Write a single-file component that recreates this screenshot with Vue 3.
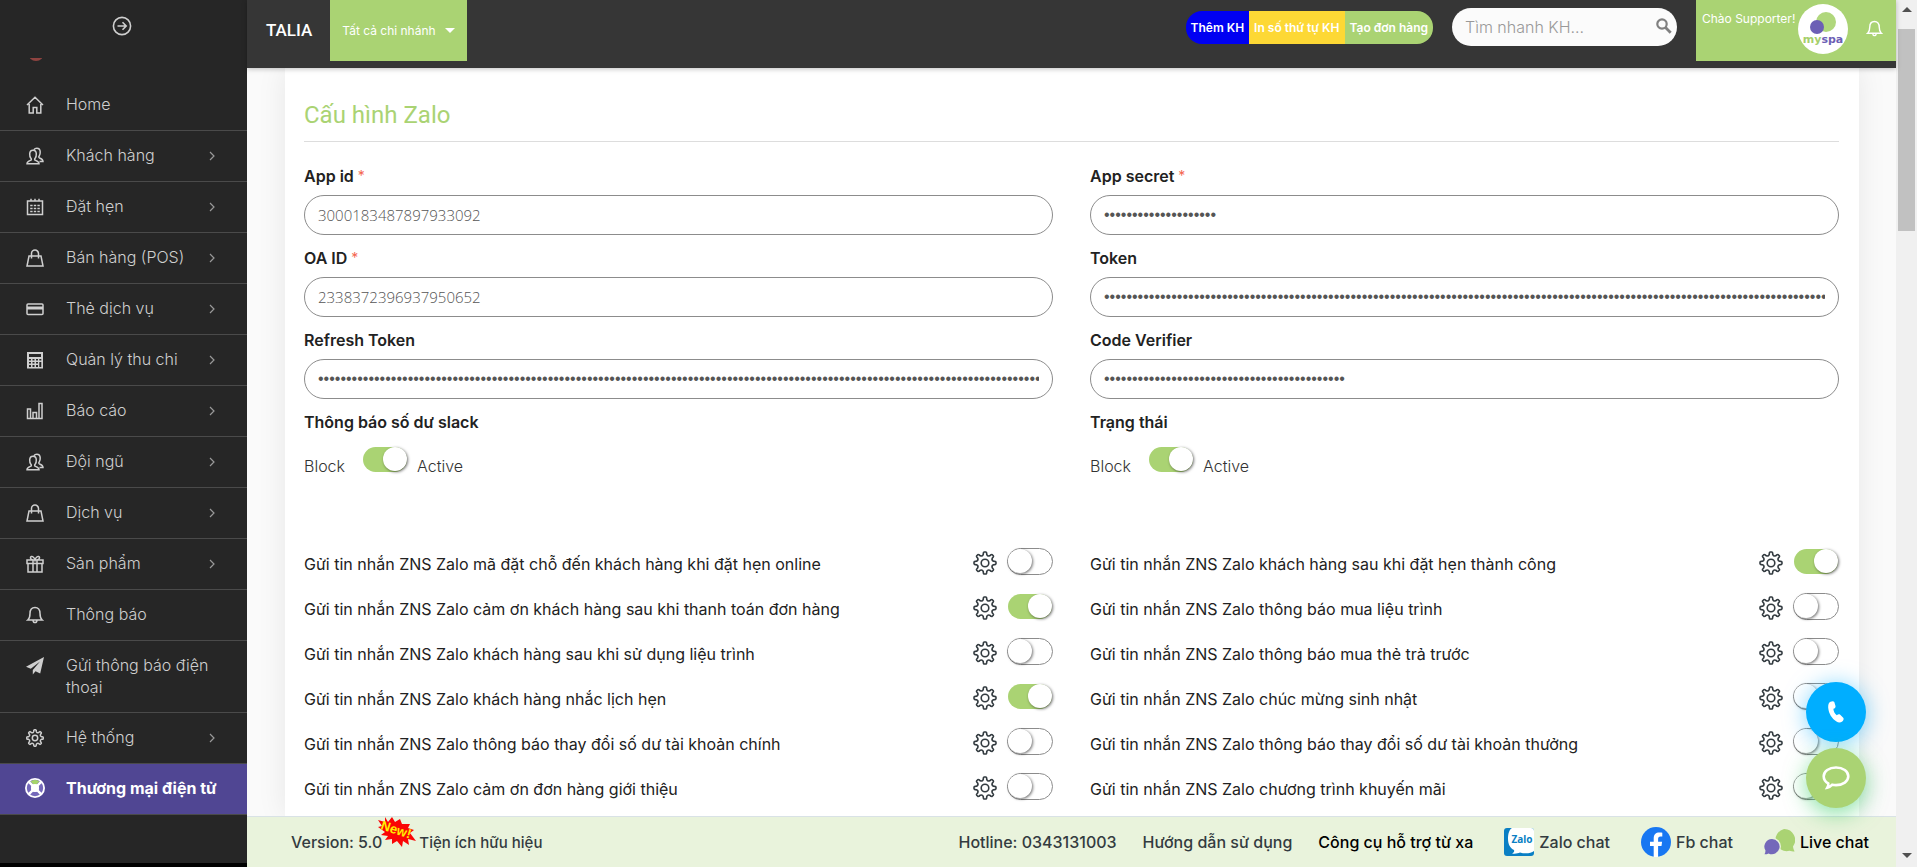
<script setup>
import { ref, reactive } from 'vue'

const menu = [
  { label: 'Home', icon: 'home' },
  { label: 'Khách hàng', icon: 'users', sub: true },
  { label: 'Đặt hẹn', icon: 'calendar', sub: true },
  { label: 'Bán hàng (POS)', icon: 'bag', sub: true },
  { label: 'Thẻ dịch vụ', icon: 'card', sub: true },
  { label: 'Quản lý thu chi', icon: 'calculator', sub: true },
  { label: 'Báo cáo', icon: 'chart', sub: true },
  { label: 'Đội ngũ', icon: 'users', sub: true },
  { label: 'Dịch vụ', icon: 'bag', sub: true },
  { label: 'Sản phẩm', icon: 'gift', sub: true },
  { label: 'Thông báo', icon: 'bell' },
  { label: 'Gửi thông báo điện thoại', icon: 'plane' },
  { label: 'Hệ thống', icon: 'gear', sub: true },
  { label: 'Thương mại điện tử', icon: 'ring', active: true },
]

const fields = reactive([
  { id: 'app-id', label: 'App id', required: true, type: 'text', value: '3000183487897933092' },
  { id: 'app-secret', label: 'App secret', required: true, type: 'password', value: 'x'.repeat(20) },
  { id: 'oa-id', label: 'OA ID', required: true, type: 'text', value: '2338372396937950652' },
  { id: 'token', label: 'Token', type: 'password', value: 'x'.repeat(180) },
  { id: 'refresh-token', label: 'Refresh Token', type: 'password', value: 'x'.repeat(180) },
  { id: 'code-verifier', label: 'Code Verifier', type: 'password', value: 'x'.repeat(43) },
])

const states = reactive([
  { id: 'slack', label: 'Thông báo số dư slack', on: true },
  { id: 'status', label: 'Trạng thái', on: true },
])

const messages = reactive([
  { label: 'Gửi tin nhắn ZNS Zalo mã đặt chỗ đến khách hàng khi đặt hẹn online', on: false },
  { label: 'Gửi tin nhắn ZNS Zalo khách hàng sau khi đặt hẹn thành công', on: true },
  { label: 'Gửi tin nhắn ZNS Zalo cảm ơn khách hàng sau khi thanh toán đơn hàng', on: true },
  { label: 'Gửi tin nhắn ZNS Zalo thông báo mua liệu trình', on: false },
  { label: 'Gửi tin nhắn ZNS Zalo khách hàng sau khi sử dụng liệu trình', on: false },
  { label: 'Gửi tin nhắn ZNS Zalo thông báo mua thẻ trả trước', on: false },
  { label: 'Gửi tin nhắn ZNS Zalo khách hàng nhắc lịch hẹn', on: true },
  { label: 'Gửi tin nhắn ZNS Zalo chúc mừng sinh nhật', on: false },
  { label: 'Gửi tin nhắn ZNS Zalo thông báo thay đổi số dư tài khoản chính', on: false },
  { label: 'Gửi tin nhắn ZNS Zalo thông báo thay đổi số dư tài khoản thưởng', on: false },
  { label: 'Gửi tin nhắn ZNS Zalo cảm ơn đơn hàng giới thiệu', on: false },
  { label: 'Gửi tin nhắn ZNS Zalo chương trình khuyến mãi', on: false },
])

const search = ref('')

// Eight-toothed cog outline centred on a 24x24 box
function gearOutline() {
  const at = (r, deg) => {
    const a = (deg * Math.PI) / 180
    return `${(12 + r * Math.sin(a)).toFixed(2)} ${(12 - r * Math.cos(a)).toFixed(2)}`
  }
  let d = `M${at(8.6, -12)}`
  for (let i = 0; i < 8; i++) {
    const a = i * 45
    d += `L${at(10.2, a - 9)}Q${at(11, a - 8)} ${at(11, a - 4)}L${at(11, a + 4)}Q${at(11, a + 8)} ${at(10.2, a + 9)}`
    d += `L${at(8.6, a + 12)}Q${at(7, a + 22.5)} ${at(8.6, a + 33)}`
  }
  return d + 'Z'
}
const gearPath = gearOutline()

const strokes = {
  home: 'M1 9 9 1.2 17 9M3.2 8v9h4v-5.500h3.600V17h4V8',
  calendar: 'M1.500 3h15v13.500h-15zM5 .8v3M9 .8v3M13 .8v3M4.200 7.500h2.400M7.800 7.500h2.400M11.400 7.500h2.400M4.200 10.500h2.400M7.800 10.500h2.400M11.400 10.500h2.400M4.200 13.500h2.400M7.800 13.500h2.400M11.400 13.500h2.400',
  bag: 'M3 7h12l2 10H1zM5.500 9.500V4.600a3.500 3.500 0 0 1 7 0v4.900',
  chart: 'M1.500 7h3v9.500h-3zM7 10.500h3.500v6H7zM13 1.500h3v15h-3zM4.500 16.500H7M10.500 16.500H13',
  users: 'M1 16.800c0-2.300 1.300-2.700 3.600-3.500 1-.4.9-1.300.3-2C4 10.200 3.600 8.500 3.700 6.800 3.800 4.500 5 3.200 7 3.200s3.200 1.300 3.300 3.600c.1 1.700-.3 3.400-1.200 4.500-.6.700-.7 1.600.3 2 2.300.8 3.600 1.200 3.600 3.500zM8 2.600C8.600 1.700 9.600 1.200 10.800 1.200c2.200 0 3.300 1.400 3.400 3.600.1 1.700-.3 3.200-1 4.200-.6.800-.5 1.600.4 2 2 .7 3.400 1.200 3.400 3.600h-3.500',
  gift: 'M1 5h16v3.500H1zM2 8.500h14V17H2zM7 5v12M11 5v12M9 5C6 5 4 4 4.500 2.300 5.200.5 8 1.500 9 5c1-3.500 3.800-4.500 4.500-2.700C14 4 12 5 9 5',
  bell: 'M1.800 14h14.400c-1.700-1.500-2.200-2.700-2.200-6.500 0-3.800-1.900-6-5-6s-5 2.200-5 6c0 3.800-.5 5-2.200 6.500zM7 14.300c.2 1.500.9 2.200 2 2.200s1.800-.7 2-2.200',
}
</script>

<template>
  <div class="shell">
    <aside class="sidebar">
      <div class="sidebar-top">
        <button class="collapse" type="button" aria-label="Menu">
          <svg viewBox="0 0 20 20" width="20" height="20" fill="none" stroke="currentColor" stroke-width="1.6">
            <circle cx="10" cy="10" r="8.600" />
            <path d="M5.500 10h8.500M10.500 6.300 14.200 10l-3.700 3.700" />
          </svg>
        </button>
        <div class="peek"><span></span></div>
      </div>
      <nav>
        <a v-for="(m, i) in menu" :key="i" href="#" class="item" :class="{ active: m.active }">
          <svg v-if="m.icon === 'gear'" class="ico" viewBox="0 0 24 24" fill="none" stroke="currentColor" stroke-width="2">
            <path :d="gearPath" /><circle cx="12" cy="12" r="3.600" />
          </svg>
          <svg v-else-if="m.icon === 'card'" class="ico" viewBox="0 0 18 18">
            <rect x="1" y="4" width="16" height="10.500" rx="1" fill="none" stroke="currentColor" stroke-width="1.500" />
            <path d="M1 6.500h16v3H1z" fill="currentColor" />
          </svg>
          <svg v-else-if="m.icon === 'calculator'" class="ico" viewBox="0 0 18 18">
            <path d="M1 1h16v16.500H1zM3 3v3h12V3zM3 8v1.500h2V8zM6.500 8v1.500h2V8zM10 8v1.500h2V8zM13.300 8v1.500h2V8zM3 11v1.500h2V11zM6.500 11v1.500h2V11zM10 11v1.500h2V11zM13.300 11v5h2v-5zM3 14v2h2v-2zM6.500 14v2h2v-2zM10 14v2h2v-2z" fill="currentColor" fill-rule="evenodd" />
          </svg>
          <svg v-else-if="m.icon === 'plane'" class="ico" viewBox="0 0 18 18">
            <path d="M18 0 0 9.800l4.800 2L14 4.500 6.800 13v4.500l2.700-3.300 4.700 2.200z" fill="currentColor" />
          </svg>
          <svg v-else-if="m.icon === 'ring'" class="ico ring" viewBox="0 0 20 20">
            <circle cx="10" cy="10" r="10" fill="#fff" />
            <circle cx="10" cy="10" r="6" fill="none" stroke="#7468ba" stroke-width="4.400" />
            <path d="M5.600 3.400a8 8 0 0 1 8.800 0L10 8z" fill="#a5d46a" />
            <path d="M3.600 3.600 16.400 16.400M16.400 3.600 3.600 16.400" stroke="#fff" stroke-width="2.400" />
            <circle cx="10" cy="10" r="4" fill="#fff" />
          </svg>
          <svg v-else class="ico" viewBox="0 0 18 18" fill="none" stroke="currentColor" stroke-width="1.500">
            <path :d="strokes[m.icon]" />
          </svg>
          <span class="item-label">{{ m.label }}</span>
          <svg v-if="m.sub" class="chev" viewBox="0 0 6 10" width="6" height="10" fill="none" stroke="currentColor" stroke-width="1.200">
            <path d="m1 1 4 4-4 4" />
          </svg>
        </a>
      </nav>
    </aside>

    <div class="page">
      <header class="topbar">
        <a href="#" class="brand">TALIA</a>
        <button type="button" class="branch" aria-haspopup="listbox">Tất cả chi nhánh <i class="caret"></i></button>
        <div class="quick">
          <button type="button" class="blue">Thêm KH</button>
          <button type="button" class="yellow">In số thứ tự KH</button>
          <button type="button" class="green">Tạo đơn hàng</button>
        </div>
        <form class="search" @submit.prevent>
          <input v-model="search" type="text" placeholder="Tìm nhanh KH..." aria-label="Tìm nhanh KH" />
          <button type="submit" aria-label="Tìm">
            <svg viewBox="0 0 16 16" width="16" height="16" fill="none" stroke="#808080">
              <circle cx="6" cy="6" r="4.700" stroke-width="2.200" /><path d="m9.500 9.500 5.200 5.200" stroke-width="2.800" />
            </svg>
          </button>
        </form>
        <div class="account">
          <span class="hello">Chào Supporter!</span>
          <a href="#" aria-label="myspa">
            <svg class="avatar" viewBox="0 0 50 50" width="50" height="50">
              <circle cx="25" cy="25" r="25" fill="#fff" />
              <circle cx="28" cy="18" r="10" fill="#b0d77c" />
              <circle cx="19" cy="23" r="7" fill="#6c5fb5" />
              <text x="25" y="39" text-anchor="middle"><tspan fill="#a5cf6b">my</tspan><tspan fill="#6c5fb5">spa</tspan></text>
            </svg>
          </a>
          <button type="button" class="alerts" aria-label="Thông báo">
            <svg viewBox="0 0 18 18" width="17" height="17" fill="none" stroke="currentColor" stroke-width="1.500"><path :d="strokes.bell" /></svg>
          </button>
        </div>
      </header>

      <main class="content">
        <section class="card">
          <h1>Cấu hình Zalo</h1>
          <form @submit.prevent>
            <div class="cols">
              <div v-for="f in fields" :key="f.id" class="field">
                <label :for="f.id">{{ f.label }} <sup v-if="f.required">*</sup></label>
                <input :id="f.id" v-model="f.value" :type="f.type" autocomplete="off" />
              </div>
              <div v-for="s in states" :key="s.id" class="field">
                <label :for="s.id">{{ s.label }}</label>
                <div class="state">
                  <span>Block</span>
                  <input :id="s.id" v-model="s.on" class="switch" type="checkbox" />
                  <span>Active</span>
                </div>
              </div>
            </div>
            <div class="cols messages">
              <div v-for="(m, i) in messages" :key="i" class="message">
                <label :for="'message-' + i">{{ m.label }}</label>
                <button type="button" class="cog" :aria-label="'Cài đặt: ' + m.label">
                  <svg viewBox="0 0 24 24" width="24" height="24" fill="none" stroke="currentColor" stroke-width="1.600" stroke-linejoin="round">
                    <path :d="gearPath" /><circle cx="12" cy="12" r="3.800" />
                  </svg>
                </button>
                <input :id="'message-' + i" v-model="m.on" class="switch" type="checkbox" />
              </div>
            </div>
          </form>
        </section>
      </main>

      <footer class="footer">
        <span class="version">Version: 5.0</span>
        <svg class="new" viewBox="0 0 38 30" width="38" height="30">
          <path d="m7 0 3 5 4-5 3 5 5-3 2 5 8 0-2 4 6 2-4 3 6 8-8-2 1 6-6-4-1 6-5-6-5 3 0-5-7 1 3-4-7-1 4-3L0 10l4-1L0 3l7 2z" fill="#fa0505" />
          <text x="18" y="17" text-anchor="middle" transform="rotate(18 18 13)">New!</text>
        </svg>
        <a href="#" class="tips">Tiện ích hữu hiệu</a>
        <div class="links">
          <a href="#">Hotline: 0343131003</a>
          <a href="#">Hướng dẫn sử dụng</a>
          <a href="#" class="strong">Công cụ hỗ trợ từ xa</a>
          <a href="#" class="chat">
            <svg viewBox="0 0 30 30" width="30" height="30">
              <rect y="1" width="30" height="28" rx="3" fill="#0a7fc4" />
              <path d="M8 1h19a3 3 0 0 1 3 3v20c-3 2.500-9 3-14 1.500-2 1-5 1.500-8 1 2-1 2.500-2 2-3.500C6 21 4 17 4 12c0-5 1-9 4-11z" fill="#fff" />
              <text class="zalo" x="18" y="16" text-anchor="middle">Zalo</text>
            </svg>Zalo chat</a>
          <a href="#" class="chat">
            <svg viewBox="0 0 30 30" width="30" height="30">
              <circle cx="15" cy="15" r="15" fill="#1877f2" />
              <path d="M12.700 30V19H9v-4.300h3.700v-3.300c0-3.800 2.200-5.800 5.600-5.800 1.600 0 3 .2 3 .2v3.800h-1.800c-1.800 0-2.400 1.100-2.400 2.300v2.800h4l-.6 4.300h-3.400v11z" fill="#fff" />
            </svg>Fb chat</a>
          <a href="#" class="chat live">
            <svg viewBox="0 0 31 26" width="31" height="26">
              <path d="M20 0a11 11 0 0 1 9 17.500c.3 2 .8 3.500 1.600 5-2 0-3.600-.1-5.200-.7A11.200 11.200 0 1 1 20 0z" fill="#aad373" />
              <circle cx="8" cy="17.500" r="9" fill="#e9f3dc" />
              <path d="M8 10a7.600 7.600 0 1 1-3.400 14.400c-1.200.6-2.600.8-4.100.8.700-1.100 1-2.200 1-3.600A7.600 7.600 0 0 1 8 10z" fill="#7468ba" />
            </svg>Live chat</a>
        </div>
      </footer>

      <div class="floats">
        <button type="button" class="fab call" aria-label="Gọi">
          <svg viewBox="0 0 16 22" width="16" height="22"><path d="M2.500.8C4 .1 5.600-.1 6.300 1l1.200 4c.2 1.300-.5 2.200-2.100 2.700 0 2.500 1.500 5 3.400 6.600 1.200-1 2.400-1.300 3.400-.5l3 3c.9 1.100.3 2.400-1 3.700-1.500 1.300-4 1.200-5.700.1C3.800 17.500.7 12.500.2 6.800.1 4 .5 1.800 2.500.8z" fill="#fff" /></svg>
        </button>
        <button type="button" class="fab talk" aria-label="Trò chuyện">
          <svg viewBox="0 0 28 24" width="28" height="24" fill="none" stroke="#fff" stroke-width="2.600"><path d="M14 1.500c7 0 12.300 3.800 12.300 8.800S21 19.100 14 19.100c-1.300 0-2.500-.1-3.700-.4-1.400 1.500-2.800 2.600-5 3 .8-1.400 1.200-2.600 1-4.200C3.300 15.900 1.700 13.400 1.700 10.300c0-5 5.300-8.800 12.300-8.800z" /></svg>
        </button>
      </div>
    </div>

    <div class="rail" aria-hidden="true">
      <i class="up"></i>
      <div class="track"><div class="thumb"></div></div>
      <i class="down"></i>
    </div>
  </div>
</template>

<style>
body { margin: 0; }
</style>

<style scoped>
.shell { display: flex; height: 100vh; overflow: hidden; font-family: Inter, "Open Sans", sans-serif; font-size: 16px; color: #333; background: #fafafa; }
.shell *, .shell { box-sizing: border-box; }
a { color: inherit; text-decoration: none; }
button { font-family: inherit; border: 0; padding: 0; background: none; color: inherit; cursor: pointer; }

.sidebar { width: 247px; flex: none; background: #262626; border-bottom: 4px solid #000; color: #cfcfcf; overflow: hidden; }
.sidebar-top { height: 80px; padding-top: 16px; }
.collapse { display: block; width: 20px; height: 20px; margin: 0 auto 22px 112px; }
.collapse svg { display: block; }
.peek { height: 3px; padding-left: 28px; overflow: hidden; display: flex; align-items: flex-end; }
.peek span { width: 16px; height: 16px; flex: none; border-radius: 50%; background: #8e4340; }
.item { display: flex; align-items: flex-start; min-height: 51px; padding: 13px 27px 14px 26px; border-bottom: 1px solid #4a4a4a; font-weight: 300; line-height: 22px; }
.item.active { background: #504693; color: #fff; font-weight: 700; }
.ico { width: 18px; height: 18px; flex: none; margin: 3px 22px 0 0; }
.ring { width: 20px; height: 20px; margin: 1px 21px 0 -1px; }
.item-label { flex: 1; }
.chev { flex: none; margin: 7px 5px 0 0; color: #999; }

.page { flex: 1; min-width: 0; display: flex; flex-direction: column; position: relative; }
.topbar { display: flex; align-items: flex-start; height: 68px; flex: none; background: #363636; color: #fff; box-shadow: 0 1px 5px rgba(0, 0, 0, .25); z-index: 1; }
.brand { margin: 0 18px 0 19px; font: 500 17px/60px Roboto, sans-serif; }
.branch { height: 61px; padding: 0 12px; background: #aad373; font-size: 12px; display: flex; align-items: center; gap: 9px; }
.caret { border: 5px solid transparent; border-top-color: #fff; border-bottom: 0; }
.quick { display: flex; margin: 11px 19px 0 auto; height: 33px; border-radius: 16px; overflow: hidden; }
.quick button { font-size: 12px; font-weight: 600; padding: 0 5px; color: #fff; white-space: nowrap; }
.blue { background: #0000f2; }
.yellow { background: #fdd835; }
.green { background: #aad373; }
.search { display: flex; align-items: center; width: 225px; height: 38px; margin: 8px 19px 0 0; border-radius: 19px; background: #fbfbfb; padding: 0 5px 0 13px; }
.search input { flex: 1; min-width: 0; border: 0; outline: 0; padding: 0; background: none; font: 300 16px Inter, sans-serif; color: #444; }
.search input::placeholder { color: #999; }
.search button { height: 22px; }
.account { display: flex; align-items: flex-start; width: 200px; height: 61px; background: #aad373; padding: 4px 13px 0 6px; }
.hello { font-size: 12px; line-height: 30px; white-space: nowrap; }
.account a { margin-left: auto; }
.avatar { display: block; }
.avatar text { font: 700 11px "DejaVu Sans", sans-serif; }
.alerts { margin: 16px 0 0 18px; }
.alerts svg { display: block; }

.content { flex: 1; min-height: 0; overflow: hidden; padding: 0 37px 0 38px; }
.card { min-height: 100%; background: #fff; padding: 25px 20px 0 19px; box-shadow: 0 0 28px rgba(0, 0, 0, .08); }
h1 { margin: 0 0 18px; padding-bottom: 4px; border-bottom: 1px solid #ddd; color: #aad373; font: 400 24px/44px Roboto, sans-serif; }
.cols { display: grid; grid-template-columns: 1fr 1fr; column-gap: 37px; }
.field { height: 82px; }
.field label { display: block; height: 35px; line-height: 32px; font-weight: 600; color: #222; }
sup { color: #f4664f; font-size: 14px; font-weight: 400; line-height: 1; vertical-align: 1px; }
.field input:not(.switch) { display: block; width: 100%; height: 40px; border: 1px solid #8c8c8c; border-radius: 20px; padding: 0 13px; background: #fff; color: #555; outline: 0; font: 300 15px "Open Sans", sans-serif; }
.field input[type="password"]:not(.switch) { font: 400 16px "Liberation Sans", Arial, sans-serif; }
.state { display: flex; align-items: flex-start; font-weight: 300; line-height: 20px; padding-top: 5px; }
.state span { padding-top: 10px; }
.state .switch { margin: 0 9px 0 17px; }
.switch { appearance: none; flex: none; width: 46px; height: 27px; margin: 0; border: 1px solid #8c8c8c; border-radius: 14px; background: #fff; cursor: pointer; }
.switch::before { content: ""; display: block; width: 24px; height: 24px; border-radius: 50%; background: #fff; box-shadow: 1px 1px 3px rgba(0, 0, 0, .55); }
.switch:checked { border-color: transparent; background: #aad373 padding-box; }
.switch:checked::before { margin-left: 20px; }
.messages { margin-top: 51px; }
.message { display: flex; align-items: center; height: 45px; }
.message label { flex: 1; color: #222; padding-top: 5px; }
.cog { width: 24px; height: 24px; margin: 3px 10px 0 0; color: #333b40; }
.cog svg { display: block; }

.footer { height: 51px; flex: none; display: flex; align-items: center; padding: 0 27px 0 44px; background: #e9f3dc; border-top: 1px solid #d9e2e6; font-size: 16px; font-weight: 500; color: #333b40; white-space: nowrap; }
.new { margin: 0 3px 20px -4px; }
.new text { font: 700 13px "Liberation Sans", sans-serif; fill: #ffef00; }
.tips { font-size: 15px; }
.links { display: flex; align-items: center; gap: 26px; margin-left: auto; }
.strong, .live { color: #000; }
.chat { display: flex; align-items: center; gap: 5px; margin-left: 5px; }
.zalo { font: 700 10px "Noto Sans", sans-serif; fill: #0a7fc4; }

.floats { position: absolute; right: 30px; bottom: 59px; display: flex; flex-direction: column; gap: 6px; z-index: 2; }
.fab { width: 60px; height: 60px; border-radius: 50%; display: flex; align-items: center; justify-content: center; }
.call { background: #00aeff; box-shadow: 0 2px 22px rgba(0, 174, 255, .5); }
.talk { background: #aad373; box-shadow: 0 6px 22px rgba(40, 200, 90, .55); }

.rail { width: 21px; flex: none; display: flex; flex-direction: column; align-items: center; background: #f0f0f0; padding: 7px 2px 9px; gap: 17px; }
.rail i { border: 5px solid transparent; }
.rail .up { border-top: 0; border-bottom-color: #505050; }
.rail .down { border-bottom: 0; border-top-color: #505050; }
.track { flex: 1; width: 100%; }
.thumb { height: 25%; background: #c1c1c1; }
</style>
